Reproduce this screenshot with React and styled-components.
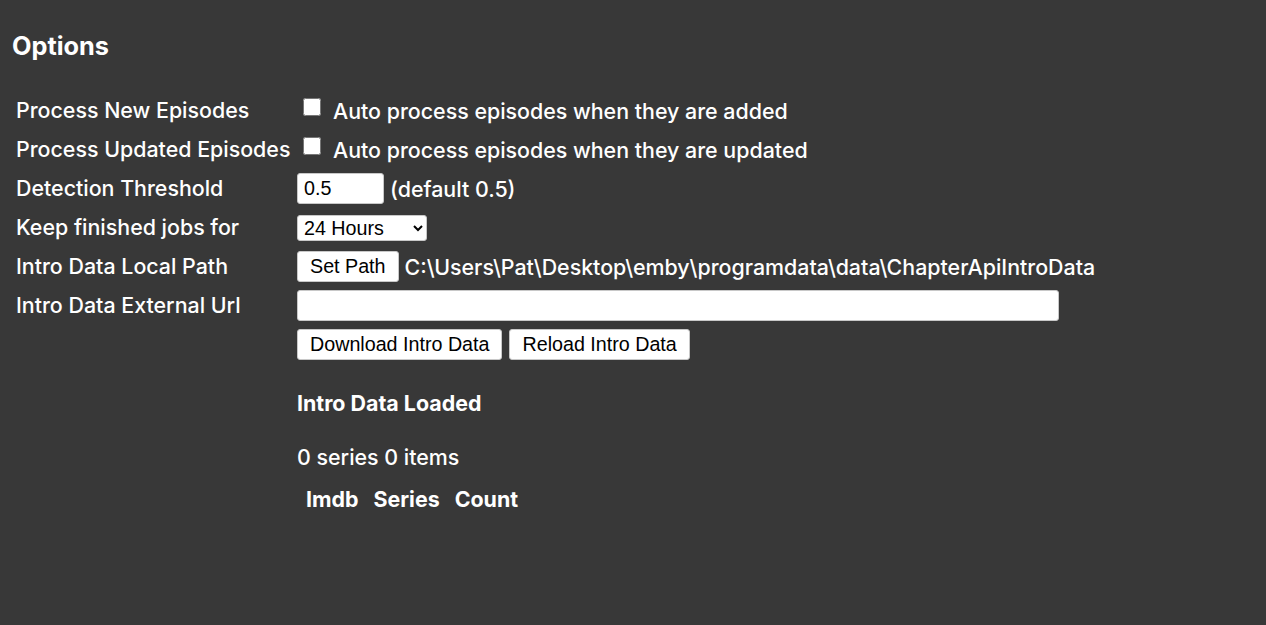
import styled, { createGlobalStyle } from "styled-components";

const Global = createGlobalStyle`
  html, body {
    margin: 0;
    background: #383838;
    color: #ffffff;
    font-family: Inter, "Noto Sans", sans-serif;
  }
`;

const Page = styled.div`
  min-height: 625px;
  padding: 30px 12px 0;
  box-sizing: border-box;
`;

const Title = styled.h1`
  margin: 0 0 33px;
  font-size: 25.3px;
  font-weight: 700;
  line-height: 32px;
`;

const Table = styled.div`
  display: grid;
  grid-template-columns: 281px 1fr;
  row-gap: 8px;
  padding-left: 4px;
`;

const Label = styled.div`
  font-size: 21.4px;
  font-weight: 500;
  line-height: 31px;
`;

const Cell = styled.div`
  display: flex;
  align-items: center;
  gap: ${(p) => p.$gap ?? 6}px;
  min-height: 31px;
  font-size: 21.4px;
  font-weight: 500;
  white-space: nowrap;
`;

const Check = styled.input.attrs({ type: "checkbox" })`
  width: 18px;
  height: 18px;
  margin: 0 12px 0 6px;
  position: relative;
  top: -4px;
`;

const controlFont = `
  font-family: "Liberation Sans", Arial, sans-serif;
  font-size: 19.7px;
  font-weight: 400;
  color: #000;
  background: #fff;
  border: 1px solid #c8c8c8;
  border-radius: 3px;
  box-sizing: border-box;
`;

const TextBox = styled.input`
  ${controlFont}
  width: ${(p) => p.$w}px;
  height: 31px;
  padding: 0 6px;
`;

const Select = styled.select`
  ${controlFont}
  width: 130px;
  height: 26px;
  padding: 0 2px;
`;

const Button = styled.button`
  ${controlFont}
  height: 31px;
  padding: 0 12px;
`;

const Data = styled.div`
  padding-left: 285px;
  margin-top: 30px;
`;

const SubTitle = styled.h3`
  margin: 0 0 28px;
  font-size: 21.4px;
  font-weight: 700;
  line-height: 26px;
`;

const Summary = styled.p`
  margin: 0 0 16px;
  font-size: 21.4px;
  font-weight: 500;
  line-height: 26px;
`;

const Head = styled.div`
  display: flex;
  gap: 15px;
  padding-left: 9px;
  font-size: 21.4px;
  font-weight: 700;
`;

export default function App() {
  return (
    <Page>
      <Global />
      <Title>Options</Title>
      <Table>
        <Label>Process New Episodes</Label>
        <Cell $gap={0}>
          <Check />
          Auto process episodes when they are added
        </Cell>
        <Label>Process Updated Episodes</Label>
        <Cell $gap={0}>
          <Check />
          Auto process episodes when they are updated
        </Cell>
        <Label>Detection Threshold</Label>
        <Cell>
          <TextBox $w={87} defaultValue="0.5" />
          (default 0.5)
        </Cell>
        <Label>Keep finished jobs for</Label>
        <Cell>
          <Select defaultValue="24">
            <option value="24">24 Hours</option>
          </Select>
        </Cell>
        <Label>Intro Data Local Path</Label>
        <Cell>
          <Button>Set Path</Button>
          C:\Users\Pat\Desktop\emby\programdata\data\ChapterApiIntroData
        </Cell>
        <Label>Intro Data External Url</Label>
        <Cell>
          <TextBox $w={762} defaultValue="" />
        </Cell>
        <Label />
        <Cell $gap={7}>
          <Button>Download Intro Data</Button>
          <Button>Reload Intro Data</Button>
        </Cell>
      </Table>
      <Data>
        <SubTitle>Intro Data Loaded</SubTitle>
        <Summary>0 series 0 items</Summary>
        <Head>
          <span>Imdb</span>
          <span>Series</span>
          <span>Count</span>
        </Head>
      </Data>
    </Page>
  );
}
